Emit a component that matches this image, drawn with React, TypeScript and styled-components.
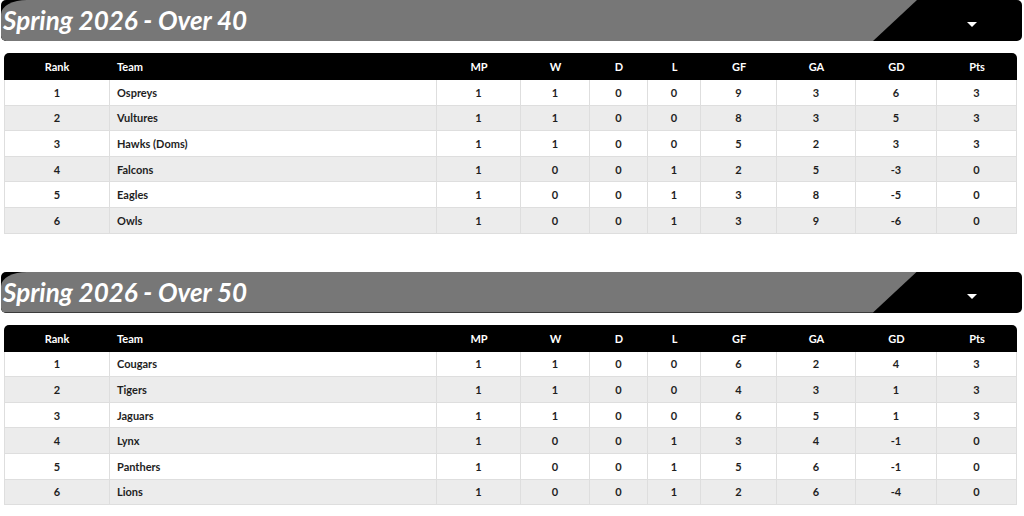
import React from "react";
import styled, { createGlobalStyle } from "styled-components";

const GlobalStyle = createGlobalStyle`
  html, body {
    margin: 0;
    padding: 0;
    background: #fff;
  }
  body {
    font-family: Lato, "Open Sans", sans-serif;
  }
`;

const Page = styled.div`
  width: 1021px;
  padding-left: 1px;
`;

const Section = styled.section`
  margin-bottom: 38px;
`;

const Banner = styled.div`
  position: relative;
  height: 41px;
  background: #000;
  border-radius: 5px;
  overflow: hidden;
`;

const BannerPanel = styled.div`
  height: 100%;
  background: #777;
  border-radius: 26px 0 0 5px / 14px 0 0 5px;
  clip-path: polygon(0 0, 916px 0, 872px 100%, 0 100%);
  display: flex;
  align-items: center;
`;

const Title = styled.h2`
  margin: 0 0 0 2px;
  color: #fff;
  font-family: Lato, sans-serif;
  font-style: italic;
  font-weight: 700;
  font-size: 26px;
  line-height: 41px;
`;

const Caret = styled.span`
  position: absolute;
  right: 45px;
  top: 22px;
  width: 0;
  height: 0;
  border-left: 5px solid transparent;
  border-right: 5px solid transparent;
  border-top: 5px solid #fff;
`;

const Table = styled.table`
  margin: 12px 0 0 3px;
  width: 1013px;
  table-layout: fixed;
  border-collapse: separate;
  border-spacing: 0;
  font-size: 11px;
  font-weight: 700;
`;

const HeadCell = styled.th<{ left?: boolean }>`
  background: #000;
  color: #fff;
  height: 27px;
  padding: 0 ${({ left }) => (left ? "7px" : "0")};
  text-align: ${({ left }) => (left ? "left" : "center")};
  font-weight: 700;
  &:first-child {
    border-top-left-radius: 5px;
  }
  &:last-child {
    border-top-right-radius: 5px;
  }
`;

const Row = styled.tr<{ shade: boolean }>`
  background: ${({ shade }) => (shade ? "#ececec" : "#fff")};
`;

const Cell = styled.td<{ left?: boolean }>`
  height: 24.6px;
  padding: 0 ${({ left }) => (left ? "7px" : "0")};
  color: #1e1e1e;
  text-align: ${({ left }) => (left ? "left" : "center")};
  border-bottom: 1px solid #dedede;
  border-right: 1px solid #dedede;
  &:first-child {
    border-left: 1px solid #dedede;
  }
`;

const widths = [106, 327, 84, 69, 58, 53, 76, 79, 81, 80];
const heads = ["Rank", "Team", "MP", "W", "D", "L", "GF", "GA", "GD", "Pts"];

type Line = [string, number, number, number, number, number, number, number];

interface Division {
  title: string;
  rows: Line[];
}

const divisions: Division[] = [
  {
    title: "Spring 2026 - Over 40",
    rows: [
      ["Ospreys", 1, 1, 0, 0, 9, 3, 3],
      ["Vultures", 1, 1, 0, 0, 8, 3, 3],
      ["Hawks (Doms)", 1, 1, 0, 0, 5, 2, 3],
      ["Falcons", 1, 0, 0, 1, 2, 5, 0],
      ["Eagles", 1, 0, 0, 1, 3, 8, 0],
      ["Owls", 1, 0, 0, 1, 3, 9, 0],
    ],
  },
  {
    title: "Spring 2026 - Over 50",
    rows: [
      ["Cougars", 1, 1, 0, 0, 6, 2, 3],
      ["Tigers", 1, 1, 0, 0, 4, 3, 3],
      ["Jaguars", 1, 1, 0, 0, 6, 5, 3],
      ["Lynx", 1, 0, 0, 1, 3, 4, 0],
      ["Panthers", 1, 0, 0, 1, 5, 6, 0],
      ["Lions", 1, 0, 0, 1, 2, 6, 0],
    ],
  },
];

const Standings = ({ division }: { division: Division }) => (
  <Section>
    <Banner>
      <BannerPanel>
        <Title>{division.title}</Title>
      </BannerPanel>
      <Caret />
    </Banner>
    <Table>
      <colgroup>
        {widths.map((w, i) => (
          <col key={i} style={{ width: w }} />
        ))}
      </colgroup>
      <thead>
        <tr>
          {heads.map((h) => (
            <HeadCell key={h} left={h == "Team"}>
              {h}
            </HeadCell>
          ))}
        </tr>
      </thead>
      <tbody>
        {division.rows.map((r, i) => {
          const [team, mp, w, d, l, gf, ga, pts] = r;
          return (
            <Row key={team} shade={i % 2 == 1}>
              <Cell>{i + 1}</Cell>
              <Cell left>{team}</Cell>
              <Cell>{mp}</Cell>
              <Cell>{w}</Cell>
              <Cell>{d}</Cell>
              <Cell>{l}</Cell>
              <Cell>{gf}</Cell>
              <Cell>{ga}</Cell>
              <Cell>{gf - ga}</Cell>
              <Cell>{pts}</Cell>
            </Row>
          );
        })}
      </tbody>
    </Table>
  </Section>
);

const App = () => (
  <Page>
    <GlobalStyle />
    {divisions.map((d) => (
      <Standings key={d.title} division={d} />
    ))}
  </Page>
);

export default App;
